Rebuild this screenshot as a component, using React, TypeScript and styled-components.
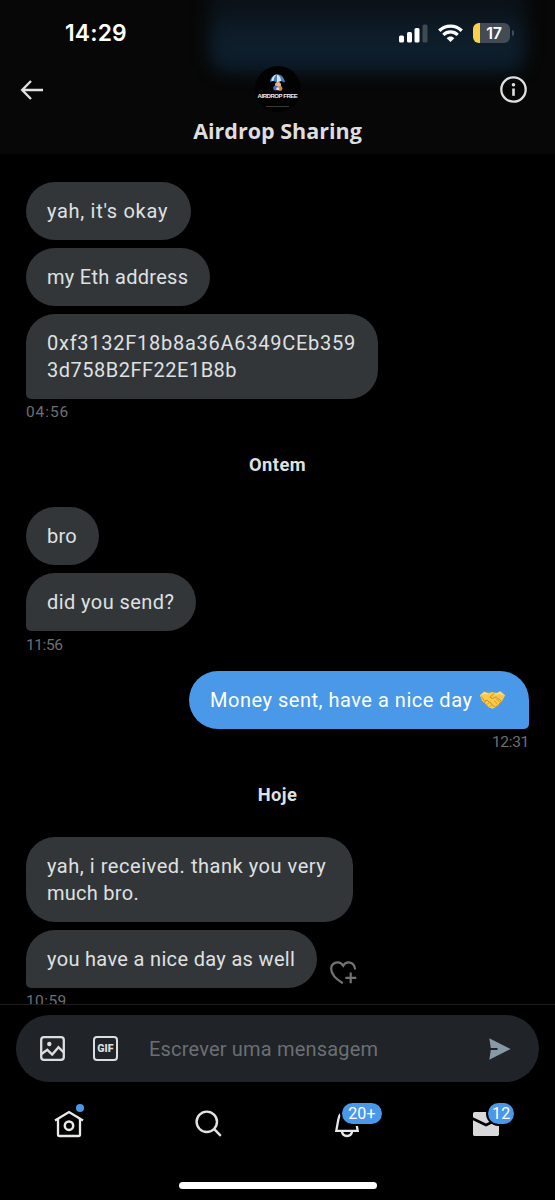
import React from "react";
import styled, { createGlobalStyle } from "styled-components";

const GlobalStyle = createGlobalStyle`
  *, *::before, *::after { box-sizing: border-box; }
  html, body { margin: 0; padding: 0; background: #000; }
  body { font-family: Roboto, "Liberation Sans", sans-serif; color: #dfe0e1; overflow: hidden; }
  svg { display: block; flex: none; }
`;

const Screen = styled.div`
  width: 555px;
  height: 1200px;
  display: flex;
  flex-direction: column;
  background: #000;
  overflow: hidden;
`;

const Header = styled.header`
  position: relative;
  height: 154px;
  flex: none;
  background: #070707;
  overflow: hidden;
`;

const HeaderGlow = styled.div`
  position: absolute;
  left: 209px;
  top: -20px;
  width: 317px;
  height: 93px;
  border-radius: 20px;
  background: linear-gradient(#0a1116 0, #0b131a 34px, #0d1b27 48px, #0e1e2b 66px, #0b1c2b 93px);
  filter: blur(8px);
`;

const StatusBar = styled.div`
  position: relative;
  height: 66px;
  display: flex;
  align-items: center;
  justify-content: space-between;
  padding: 0 45px 0 65px;
`;

const Clock = styled.span`
  font-family: Inter, sans-serif;
  font-weight: 600;
  font-size: 22.8px;
  line-height: 28px;
  letter-spacing: 0.2px;
  color: #fff;
`;

const StatusIcons = styled.div`
  display: flex;
  align-items: center;
  gap: 10px;
`;

const Battery = styled.div`
  position: relative;
  width: 37px;
  height: 20px;
  border-radius: 6px;
  padding-left: 5px;
  background: linear-gradient(90deg, #fcd049 0 6.5px, #434c54 6.5px);
  color: #fff;
  font: 600 16px/20px Inter, sans-serif;
  letter-spacing: -0.2px;
  text-align: center;

  &::after {
    content: "";
    position: absolute;
    right: -4px;
    top: 7px;
    width: 2px;
    height: 6px;
    border-radius: 0 2px 2px 0;
    background: #434c54;
  }
`;

const TitleBar = styled.div`
  position: relative;
  display: grid;
  grid-template-columns: 60px 1fr 60px;
  align-items: start;
  padding: 0 20px;
`;

const HeaderButton = styled.span<{ $end?: boolean }>`
  height: 47px;
  display: flex;
  align-items: center;
  justify-content: ${(p) => (p.$end ? "flex-end" : "flex-start")};
  padding-right: ${(p) => (p.$end ? 8 : 0)}px;
`;

const Contact = styled.div`
  display: flex;
  flex-direction: column;
  align-items: center;
`;

const Avatar = styled.div`
  width: 46px;
  height: 46px;
  border-radius: 50%;
  background: #020203;
  display: flex;
  flex-direction: column;
  align-items: center;
  padding-top: 8px;
`;

const AvatarLabel = styled.span`
  font: 700 6px/8px "Liberation Sans", sans-serif;
  letter-spacing: -0.45px;
  color: #eee;
  white-space: nowrap;
`;

const AvatarRule = styled.span`
  width: 23px;
  height: 1px;
  margin-top: 6px;
  background: #38393a;
`;

const ContactName = styled.h1`
  margin: 6px 0 0;
  font: 700 21.5px/26px "Open Sans", sans-serif;
  color: #dededf;
  white-space: nowrap;
`;

const Conversation = styled.main`
  height: 850px;
  flex: none;
  overflow: hidden;
  padding: 28px 26px 0;
  display: flex;
  flex-direction: column;
`;

const MessageRow = styled.div<{ $own?: boolean; $before?: number }>`
  display: flex;
  flex: none;
  justify-content: ${(p) => (p.$own ? "flex-end" : "flex-start")};
  align-items: flex-end;
  margin: ${(p) => p.$before ?? 0}px 0 8px;
`;

const Bubble = styled.div<{ $width: number; $own?: boolean; $tail?: boolean }>`
  width: ${(p) => p.$width}px;
  padding: 16px 0 15.4px 21px;
  border-radius: ${(p) =>
    p.$tail ? (p.$own ? "29px 29px 5px 29px" : "29px 29px 29px 5px") : "29px"};
  background: ${(p) => (p.$own ? "#4a99e9" : "#333639")};
  color: ${(p) => (p.$own ? "#fff" : "#dfe0e1")};
  font-size: 20px;
  line-height: 26.7px;
  white-space: nowrap;
`;

const Line = styled.div<{ $tracking: number }>`
  display: flex;
  align-items: center;
  white-space: pre;
  letter-spacing: ${(p) => p.$tracking}px;

  svg {
    margin-left: 1px;
  }
`;

const Time = styled.time<{ $own?: boolean; $tracking?: number }>`
  flex: none;
  margin-top: -4.8px;
  font-size: 15.5px;
  line-height: 20px;
  letter-spacing: ${(p) => p.$tracking ?? 0}px;
  color: #6d7074;
  text-align: ${(p) => (p.$own ? "right" : "left")};
`;

const DayLabel = styled.h2`
  flex: none;
  margin: 31px 0 30px;
  font-size: 18.3px;
  font-weight: 700;
  line-height: 24px;
  text-align: center;
  letter-spacing: 0.45px;
`;

const ReactionButton = styled.span`
  margin: 0 0 3px 13px;
`;

const Footer = styled.footer`
  flex: 1;
  border-top: 1px solid #1c1d1e;
  padding-top: 10px;
  display: flex;
  flex-direction: column;
`;

const Composer = styled.div`
  width: 523px;
  height: 67px;
  margin: 0 auto;
  padding: 0 28px 0 24px;
  border-radius: 34px;
  background: #202327;
  display: flex;
  align-items: center;
`;

const GifBadge = styled.span`
  width: 25px;
  height: 25px;
  margin: 0 31px 0 28px;
  border: 2.4px solid #dcddde;
  border-radius: 4px;
  font: 900 10.6px/21px Roboto, sans-serif;
  letter-spacing: 0.1px;
  text-align: center;
  color: #dcddde;
`;

const Placeholder = styled.span`
  flex: 1;
  font-size: 20px;
  letter-spacing: 0.19px;
  color: #6b6f73;
`;

const TabBar = styled.nav`
  display: grid;
  grid-template-columns: repeat(4, 1fr);
  height: 83px;
`;

const Tab = styled.span`
  position: relative;
  display: flex;
  justify-content: center;
  align-items: center;
`;

const UnreadDot = styled.span`
  position: absolute;
  left: 75.5px;
  top: 22px;
  width: 8px;
  height: 8px;
  border-radius: 50%;
  background: #4a99e9;
`;

const CountBadge = styled.span<{ $left: number; $width: number }>`
  position: absolute;
  left: ${(p) => p.$left}px;
  top: 21px;
  width: ${(p) => p.$width}px;
  height: 21px;
  border-radius: 11px;
  background: #4a99e9;
  box-shadow: 0 0 0 2px #000;
  color: #fff;
  font-size: 16px;
  line-height: 21px;
  letter-spacing: 0.2px;
  text-align: center;
`;

const HomeIndicator = styled.div`
  width: 198px;
  height: 7px;
  margin: 17px auto 0;
  border-radius: 4px;
  background: #fff;
`;

const SignalIcon = () => (
  <svg width="29" height="19" viewBox="0 0 29 19" fill="#fff">
    <rect x="0" y="11.5" width="5" height="7" rx="1.5" />
    <rect x="8" y="8" width="5" height="10.5" rx="1.5" />
    <rect x="15.5" y="4" width="5" height="14.5" rx="1.5" />
    <rect x="23.5" y="0.5" width="5" height="18" rx="1.5" fill="#3f4a53" />
  </svg>
);

const WifiIcon = () => (
  <svg width="25" height="19" viewBox="0 0 25 19" fill="none" stroke="#fff">
    <path d="M1.3 6.8C7.5.5 17.5.5 23.7 6.8" strokeWidth="3.4" />
    <path d="M5.3 10.9c4-4 10.4-4 14.4 0" strokeWidth="3.2" />
    <path d="M8.7 14.2c2.1-2.2 5.5-2.2 7.6 0l-3.8 3.9z" fill="#fff" stroke="none" />
  </svg>
);

const BackIcon = () => (
  <svg width="24" height="20" viewBox="0 0 24 20" fill="none" stroke="#e2e2e2" strokeWidth="2.4">
    <path d="M11 1 2.2 10 11 19M2.2 10H23" />
  </svg>
);

const InfoIcon = () => (
  <svg width="27" height="27" viewBox="0 0 27 27" fill="none" stroke="#dfdfe0">
    <circle cx="13.5" cy="13.5" r="12.2" strokeWidth="2.3" />
    <path d="M13.5 12.5v7.3" strokeWidth="2.6" />
    <circle cx="13.5" cy="8.8" r="1.8" fill="#dfdfe0" stroke="none" />
  </svg>
);

const ParachuteIcon = () => (
  <svg width="17" height="18" viewBox="0 0 17 18">
    <path d="M1 8C2 2.5 5 .5 8.5.6 12 .5 15 3 16 8.5L12 7 8 8.2 4.5 7z" fill="#4a7fc4" />
    <path d="M4.5 7C5 3.5 6.5 1 8 .6 6 .5 3 2.5 2.5 7zM8 8.2V.6c2.5 1 4 3.4 4 6.4z" fill="#d5e5f4" />
    <circle cx="9" cy="11" r="3" fill="#e7b58c" />
    <circle cx="6.8" cy="14" r="2.5" fill="#596cc0" />
    <circle cx="11" cy="14.5" r="2.4" fill="#c98a48" />
    <circle cx="8.8" cy="14.8" r="1.5" fill="#e8e1ed" />
  </svg>
);

const HandshakeIcon = () => (
  <svg width="27" height="20" viewBox="0 0 27 20">
    <path
      d="M.8 5.2 5.2 1.4l4 1.7 4-1.1 4.4 1L21.4 1l4.8 4.2-3.3 6.2-3.8 4.3-2.8 1.7-2.8 1.3-3.8-1.5-3.5-3.6-3.3-2.9z"
      fill="#f8c94a"
    />
    <path
      d="m2.4 6.6 3.3 4.8 2.5-1.2 2 1.8 2 1.2.9 2 3.4 1.7 2.8-1.8 3-3.9-5.2-4.4-4 1.7-2.2-1.3 4-3.4"
      fill="none"
      stroke="#c78b25"
      strokeWidth=".9"
    />
    <path d="m5.5 12.5 2-1.8m.4 4 2.4-2.3m.5 4.4 2-2.1m2.2-3.9 3.4 3m-1.4-5 3.6 3.2" stroke="#d9982b" strokeWidth=".9" />
    <path d="m3 4.8 2.6-1.9 3.1 1.2M16.5 4.5l4.6-1.8 2.6 2.3" fill="none" stroke="#ffe07d" strokeWidth="1.2" />
  </svg>
);

const HeartPlusIcon = () => (
  <svg width="27" height="24" viewBox="0 0 27 24" fill="none" stroke="#717376" strokeWidth="2.2">
    <path d="M12.8 22.3C6.6 18.5 1.2 13.6 1.2 7.8 1.2 1.2 9.8-.9 13.2 4.8 16.4-.9 24.6.9 25.1 8.5" />
    <path d="M20.7 11.5v10.8M15.3 16.9h10.9" />
  </svg>
);

const PhotoIcon = () => (
  <svg width="25" height="25" viewBox="0 0 25 25" fill="none" stroke="#dcddde" strokeWidth="2.3">
    <rect x="1.2" y="1.2" width="22.6" height="22.6" rx="2.8" />
    <circle cx="9.3" cy="8" r="2.2" fill="#dcddde" stroke="none" />
    <path d="m1.5 18 5.8-4.2 4.9 4.7 6.3-7.3 5.3 5.3" strokeWidth="2.4" />
  </svg>
);

const SendIcon = () => (
  <svg width="22" height="22" viewBox="0 0 22 22" fill="#8799a6">
    <path d="M.3.2 21.7 11 .3 21.8 1.8 12H8.5V10H1.8z" />
  </svg>
);

const HomeIcon = () => (
  <svg width="30" height="28" viewBox="0 0 30 28" fill="none" stroke="#e7e9ea" strokeWidth="2.3">
    <path d="M1 10.6 15 2l14 8.6" />
    <path d="M4 9v15.5c0 .8.6 1.5 1.5 1.5h19c.9 0 1.5-.7 1.5-1.5V9" />
    <circle cx="15" cy="15.7" r="4.2" strokeWidth="2.5" />
  </svg>
);

const SearchIcon = () => (
  <svg width="27" height="27" viewBox="0 0 27 27" fill="none" stroke="#e2e3e4" strokeWidth="2.4">
    <circle cx="11.8" cy="11.8" r="10.2" />
    <path d="m19.2 19.2 6.6 6.6" />
  </svg>
);

const BellIcon = () => (
  <svg width="26" height="28" viewBox="0 0 26 28" fill="none" stroke="#e7e9ea" strokeWidth="2.3">
    <path d="M13 2C8 2 5 5 4.4 9L2.3 20.8h21.4L21.6 9C21 5 18 2 13 2z" />
    <path d="M7.8 21c.5 3.2 2.5 5 5.2 5s4.7-1.8 5.2-5" />
  </svg>
);

const EnvelopeIcon = () => (
  <svg width="28" height="26" viewBox="0 0 28 26" fill="#d9d9d9">
    <path d="M1 2.8C1 1.8 1.8 1 2.8 1h22.4c1 0 1.8.8 1.8 1.8v3.4l-13 6.4L1 6.2z" />
    <path d="m1 9.2 13 6.3 13-6.3v14c0 1-.8 1.8-1.8 1.8H2.8c-1 0-1.8-.8-1.8-1.8z" />
  </svg>
);

export default function App() {
  return (
    <Screen>
      <GlobalStyle />
      <Header>
        <HeaderGlow />
        <StatusBar>
          <Clock>14:29</Clock>
          <StatusIcons>
            <SignalIcon />
            <WifiIcon />
            <Battery>17</Battery>
          </StatusIcons>
        </StatusBar>
        <TitleBar>
          <HeaderButton>
            <BackIcon />
          </HeaderButton>
          <Contact>
            <Avatar>
              <ParachuteIcon />
              <AvatarLabel>AIRDROP FREE</AvatarLabel>
              <AvatarRule />
            </Avatar>
            <ContactName>Airdrop Sharing</ContactName>
          </Contact>
          <HeaderButton $end>
            <InfoIcon />
          </HeaderButton>
        </TitleBar>
      </Header>

      <Conversation>
        <MessageRow>
          <Bubble $width={164.5}>
            <Line $tracking={0.7}>yah, it's okay</Line>
          </Bubble>
        </MessageRow>
        <MessageRow>
          <Bubble $width={184}>
            <Line $tracking={0.3}>my Eth address</Line>
          </Bubble>
        </MessageRow>
        <MessageRow>
          <Bubble $width={351.5} $tail>
            <Line $tracking={0.74}>0xf3132F18b8a36A6349CEb359</Line>
            <Line $tracking={0.5}>3d758B2FF22E1B8b</Line>
          </Bubble>
        </MessageRow>
        <Time $tracking={0.9}>04:56</Time>

        <DayLabel>Ontem</DayLabel>
        <MessageRow>
          <Bubble $width={72.5}>
            <Line $tracking={0.2}>bro</Line>
          </Bubble>
        </MessageRow>
        <MessageRow>
          <Bubble $width={170} $tail>
            <Line $tracking={0.43}>did you send?</Line>
          </Bubble>
        </MessageRow>
        <Time $tracking={-0.4}>11:56</Time>

        <MessageRow $own $before={16.5}>
          <Bubble $width={340} $own $tail>
            <Line $tracking={0.52}>
              Money sent, have a nice day <HandshakeIcon />
            </Line>
          </Bubble>
        </MessageRow>
        <Time $own $tracking={-0.3}>12:31</Time>

        <DayLabel>Hoje</DayLabel>
        <MessageRow>
          <Bubble $width={327}>
            <Line $tracking={0.54}>yah, i received. thank you very</Line>
            <Line $tracking={0.27}>much bro.</Line>
          </Bubble>
        </MessageRow>
        <MessageRow>
          <Bubble $width={290.5} $tail>
            <Line $tracking={0.33}>you have a nice day as well</Line>
          </Bubble>
          <ReactionButton>
            <HeartPlusIcon />
          </ReactionButton>
        </MessageRow>
        <Time $tracking={0.4}>10:59</Time>
      </Conversation>

      <Footer>
        <Composer>
          <PhotoIcon />
          <GifBadge>GIF</GifBadge>
          <Placeholder>Escrever uma mensagem</Placeholder>
          <SendIcon />
        </Composer>
        <TabBar>
          <Tab>
            <HomeIcon />
            <UnreadDot />
          </Tab>
          <Tab>
            <SearchIcon />
          </Tab>
          <Tab>
            <BellIcon />
            <CountBadge $left={64.5} $width={40}>20+</CountBadge>
          </Tab>
          <Tab>
            <EnvelopeIcon />
            <CountBadge $left={72} $width={26}>12</CountBadge>
          </Tab>
        </TabBar>
        <HomeIndicator />
      </Footer>
    </Screen>
  );
}
